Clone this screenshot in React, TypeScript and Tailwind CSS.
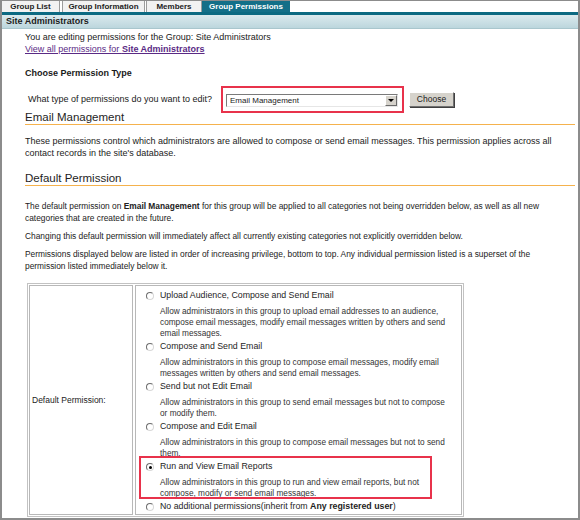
import React from 'react';

interface PermissionOption {
  title: React.ReactNode;
  lines: string[];
  checked?: boolean;
}

const options: PermissionOption[] = [
  {
    title: 'Upload Audience, Compose and Send Email',
    lines: [
      'Allow administrators in this group to upload email addresses to an audience,',
      'compose email messages, modify email messages written by others and send',
      'email messages.',
    ],
  },
  {
    title: 'Compose and Send Email',
    lines: [
      'Allow administrators in this group to compose email messages, modify email',
      'messages written by others and send email messages.',
    ],
  },
  {
    title: 'Send but not Edit Email',
    lines: [
      'Allow administrators in this group to send email messages but not to compose',
      'or modify them.',
    ],
  },
  {
    title: 'Compose and Edit Email',
    lines: [
      'Allow administrators in this group to compose email messages but not to send',
      'them.',
    ],
  },
  {
    title: 'Run and View Email Reports',
    lines: [
      'Allow administrators in this group to run and view email reports, but not',
      'compose, modify or send email messages.',
    ],
    checked: true,
  },
  {
    title: (
      <>
        No additional permissions(inherit from <b>Any registered user</b>)
      </>
    ),
    lines: [],
  },
];

const Radio: React.FC<{ checked?: boolean }> = ({ checked }) => (
  <span className="relative inline-flex h-[8px] w-[8px] shrink-0 items-center justify-center rounded-full border border-t-[#6d6d6d] border-l-[#6d6d6d] border-r-[#d8d8d8] border-b-[#d8d8d8] bg-white">
    {checked && <span className="h-[3px] w-[3px] rounded-full bg-black" />}
  </span>
);

const SectionHeading: React.FC<{ children: React.ReactNode }> = ({ children }) => (
  <div className="border-b border-[#f5b24d] text-[11.5px] leading-[14px] text-[#1e1e1e]">{children}</div>
);

export default function App() {
  return (
    <div className="h-[520px] w-[580px] overflow-hidden border-2 border-t border-[#8c8c8c] bg-white font-['Liberation_Sans',Arial,Helvetica,sans-serif] text-[#1a1a1a]">
      {/* tabs */}
      <div className="flex h-[11px] text-[8px] font-bold leading-[11px]">
        <div className="w-[58px] border-r border-[#9c9c9c] bg-[#f2f2f2] text-center text-[#222]">Group List</div>
        <div className="ml-[2px] w-[83px] border-x border-[#9c9c9c] bg-[#f2f2f2] text-center text-[#222]">Group Information</div>
        <div className="ml-[1px] w-[56px] border-x border-[#9c9c9c] bg-[#f2f2f2] text-center text-[#222]">Members</div>
        <div className="w-[88px] bg-[#136f88] text-center text-white">Group Permissions</div>
      </div>
      <div className="h-[3px] bg-[#0c6a82]" />
      <div className="flex h-[14px] items-center border-b border-[#a9c6cd] bg-gradient-to-b from-[#dbeaee] to-[#bcd6dd] pl-[4px] text-[9px] font-bold text-[#1c1c1c]">
        Site Administrators
      </div>

      <div className="pl-[23px] pr-[3px]">
        <div className="mt-[2px] text-[9px] leading-[12px]">
          <div>You are editing permissions for the Group: Site Administrators</div>
          <a href="#" className="text-[#5a2a85] underline">
            View all permissions for <b>Site Administrators</b>
          </a>
        </div>

        <div className="mt-[12px] text-[9px] font-bold leading-[12px]">Choose Permission Type</div>

        <div className="mt-[7px] flex items-center text-[9px]">
          <div className="w-[196px] pl-[3px] pt-[1px]">What type of permissions do you want to edit?</div>
          <div className="border-2 border-[#e8324b] pb-[4px] pl-[3px] pr-[4px] pt-[6px]">
            <div className="flex h-[13px] w-[172px] items-center border border-t-[#7a7a7a] border-l-[#7a7a7a] border-r-[#e6e6e6] border-b-[#e6e6e6] bg-white">
              <span className="flex-1 pl-[3px] text-[8px] leading-[11px]">Email Management</span>
              <span className="flex h-[11px] w-[12px] items-center justify-center border border-t-white border-l-white border-r-[#6a6a6a] border-b-[#6a6a6a] bg-[#d6d3cc]">
                <span className="h-0 w-0 border-x-[3px] border-t-[3px] border-x-transparent border-t-black" />
              </span>
            </div>
          </div>
          <div className="ml-[5px] flex h-[15px] w-[45px] items-center justify-center border border-t-white border-l-white border-r-[#707070] border-b-[#707070] bg-[#d6d3cc] text-[8.5px] shadow-[1px_1px_0_#404040]">
            Choose
          </div>
        </div>

        <div className="-mt-[3px]">
          <SectionHeading>Email Management</SectionHeading>
        </div>
        <p className="mt-[10px] text-[9px] leading-[12px] text-[#222]">
          These permissions control which administrators are allowed to compose or send email messages. This permission applies across all
          <br />
          contact records in the site's database.
        </p>

        <div className="mt-[12px]">
          <SectionHeading>Default Permission</SectionHeading>
        </div>
        <div className="mt-[14px] text-[8.4px] leading-[12px] text-[#222]">
          <p>
            The default permission on <b>Email Management</b> for this group will be applied to all categories not being overridden below, as well as all new
            <br />
            categories that are created in the future.
          </p>
          <p className="mt-[6px]">
            Changing this default permission will immediately affect all currently existing categories not explicitly overridden below.
          </p>
          <p className="mt-[6px]">
            Permissions displayed below are listed in order of increasing privilege, bottom to top. Any individual permission listed is a superset of the
            <br />
            permission listed immediately below it.
          </p>
        </div>

        <div className="ml-[2px] mt-[11px] flex h-[234px] w-[437px] gap-[2px] border border-[#c2c2c2] p-[1px]">
          <div className="flex w-[104px] items-center border border-[#b8b8b8] pl-[2px] text-[8.5px] text-[#222]">
            Default Permission:
          </div>
          <div className="flex-1 border border-[#b8b8b8] pt-[4px]">
            {options.map((opt, i) => (
              <div key={i} className="relative pb-[2px]">
                {opt.checked && (
                  <div className="pointer-events-none absolute -top-[5px] left-[3px] h-[43px] w-[293px] border-2 border-[#e8324b]" />
                )}
                <div className="flex h-[12px] items-center pl-[10px]">
                  <Radio checked={opt.checked} />
                  <span className="ml-[6px] whitespace-nowrap text-[8.8px] text-[#1e1e1e]">{opt.title}</span>
                </div>
                {opt.lines.length > 0 && (
                  <div className="mt-[4px] pl-[24px] text-[8.25px] leading-[11px] text-[#333]">
                    {opt.lines.map((l) => (
                      <div key={l} className="whitespace-nowrap">
                        {l}
                      </div>
                    ))}
                  </div>
                )}
              </div>
            ))}
          </div>
        </div>
      </div>
    </div>
  );
}
